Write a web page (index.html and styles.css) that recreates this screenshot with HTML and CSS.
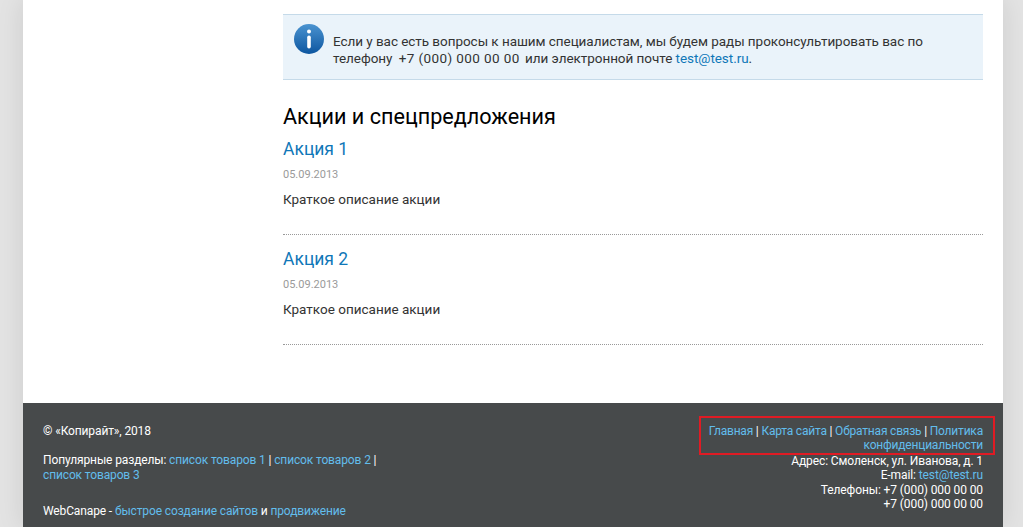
FILE: index.html
```html
<!DOCTYPE html>
<html lang="ru">
<head>
<meta charset="utf-8">
<title>Акции</title>
<link rel="stylesheet" href="styles.css">
</head>
<body>
<div class="page">
  <main class="main">
    <aside class="side"></aside>
    <section class="content">
      <div class="notice">
        <svg class="notice-icon" width="30" height="30" viewBox="0 0 30 30" aria-hidden="true">
          <defs>
            <linearGradient id="ig" x1="0" y1="0" x2="0" y2="1">
              <stop offset="0" stop-color="#4a93d0"/>
              <stop offset="1" stop-color="#0d56a0"/>
            </linearGradient>
          </defs>
          <circle cx="15" cy="15" r="15" fill="url(#ig)"/>
          <circle cx="15" cy="7.6" r="2" fill="#fff"/>
          <rect x="13.2" y="11.5" width="3.6" height="13" rx="1.8" fill="#fff"/>
        </svg>
        <p class="notice-text">Если у вас есть вопросы к нашим специалистам, мы будем рады проконсультировать вас по телефону <span class="notice-phone">+7 (000) 000 00 00</span> или электронной почте <a href="#">test@test.ru</a>.</p>
      </div>
      <h2 class="title">Акции и спецпредложения</h2>
      <article class="promo">
        <h3 class="promo-name"><a href="#">Акция 1</a></h3>
        <div class="promo-date">05.09.2013</div>
        <p class="promo-text">Краткое описание акции</p>
      </article>
      <article class="promo">
        <h3 class="promo-name"><a href="#">Акция 2</a></h3>
        <div class="promo-date">05.09.2013</div>
        <p class="promo-text">Краткое описание акции</p>
      </article>
    </section>
  </main>
  <footer class="footer">
    <div class="foot-left">
      <p class="foot-copy">© «Копирайт», 2018</p>
      <p class="foot-pop">Популярные разделы: <a href="#">список товаров 1</a> | <a href="#">список товаров 2</a> | <a href="#">список товаров 3</a></p>
      <p class="foot-wc">WebCanape - <a href="#">быстрое создание сайтов</a> и <a href="#">продвижение</a></p>
    </div>
    <div class="foot-right">
      <nav class="foot-nav"><a href="#">Главная</a> | <a href="#">Карта сайта</a> | <a href="#">Обратная связь</a> | <a href="#">Политика конфиденциальности</a></nav>
      <div class="foot-contacts">
        Адрес: Смоленск, ул. Иванова, д. 1<br>
        E-mail: <a href="#">test@test.ru</a><br>
        Телефоны: +7 (000) 000 00 00<br>
        +7 (000) 000 00 00
      </div>
    </div>
  </footer>
</div>
</body>
</html>
```
FILE: styles.css
```css
html, body {
  margin: 0;
  padding: 0;
  height: 527px;
  overflow: hidden;
}
body {
  background: #e3e3e3;
  font-family: Roboto, "Open Sans", sans-serif;
  font-size: 14px;
  color: #333;
}
a {
  text-decoration: none;
}
p, h2, h3 {
  margin: 0;
  font-weight: 400;
}
.page {
  width: 980px;
  margin: 0 20px 0 23px;
  background: #fff;
  height: 527px;
  display: flex;
  flex-direction: column;
  box-shadow: 0 0 25px rgba(0, 0, 0, 0.1);
}
.main {
  height: 403px;
  display: flex;
  padding-right: 20px;
  flex: none;
  box-sizing: border-box;
}
.side {
  width: 260px;
  flex: none;
}
.content {
  flex: 1;
  padding-top: 14px;
}
.notice {
  display: flex;
  gap: 9px;
  height: 66px;
  box-sizing: border-box;
  padding: 9px 11px;
  background: #eaf3fa;
  border-top: 1px solid #c5dae9;
  border-bottom: 1px solid #c5dae9;
}
.notice-icon {
  flex: none;
}
.notice-text {
  padding-top: 9px;
  line-height: 17px;
  font-size: 13.5px;
  letter-spacing: -0.05px;
  color: #333;
}
.notice-phone {
  letter-spacing: 0.4px;
  padding: 0 2px 0 3px;
}
.notice-text a {
  color: #0f77b8;
}
.title {
  margin-top: 22px;
  font-size: 21.6px;
  line-height: 30px;
  color: #000;
}
.promo {
  border-bottom: 1px dotted #999;
  padding: 12px 0 26px;
}
.promo:first-of-type {
  padding-top: 5px;
}
.promo-name {
  font-size: 17.5px;
  line-height: 24px;
}
.promo-name a {
  color: #0f77b8;
}
.promo-date {
  margin-top: 5px;
  font-size: 11px;
  line-height: 18px;
  color: #9a9a9a;
}
.promo-text {
  margin-top: 6px;
  font-size: 13.5px;
  line-height: 18px;
  color: #333;
}
.footer {
  flex: none;
  height: 124px;
  box-sizing: border-box;
  background: #474a4b;
  color: #fff;
  display: flex;
  justify-content: space-between;
  padding: 21px 20px 0 20px;
  font-size: 12px;
  line-height: 14.3px;
  letter-spacing: -0.2px;
}
.footer a {
  color: #62bdec;
}
.foot-left {
  width: 335px;
  letter-spacing: -0.13px;
}
.foot-pop {
  margin-top: 15px;
}
.foot-wc {
  margin-top: 22px;
}
.foot-right {
  width: 284px;
  text-align: right;
}
.foot-nav {
  border: 2px solid #e01b24;
  margin: -8px -12px 0 0;
  padding: 6px 10px 0 0;
}
.foot-contacts {
  margin-top: -1px;
  line-height: 14.6px;
  letter-spacing: -0.1px;
}
```
